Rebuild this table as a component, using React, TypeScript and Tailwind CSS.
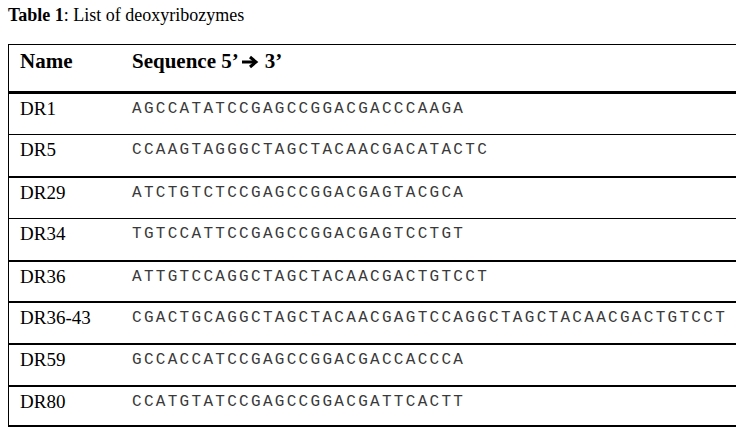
import React from 'react';

const rows = [
  { name: 'DR1', seq: 'AGCCATATCCGAGCCGGACGACCCAAGA', cls: 'h-[41px] border-b' },
  { name: 'DR5', seq: 'CCAAGTAGGGCTAGCTACAACGACATACTC', cls: 'h-[43px] border-b-2' },
  { name: 'DR29', seq: 'ATCTGTCTCCGAGCCGGACGAGTACGCA', cls: 'h-[41px] border-b' },
  { name: 'DR34', seq: 'TGTCCATTCCGAGCCGGACGAGTCCTGT', cls: 'h-[43px] border-b-2' },
  { name: 'DR36', seq: 'ATTGTCCAGGCTAGCTACAACGACTGTCCT', cls: 'h-[41px] border-b-2' },
  { name: 'DR36-43', seq: 'CGACTGCAGGCTAGCTACAACGAGTCCAGGCTAGCTACAACGACTGTCCT', cls: 'h-[42px] border-b-2' },
  { name: 'DR59', seq: 'GCCACCATCCGAGCCGGACGACCACCCA', cls: 'h-[42px] border-b-2' },
  { name: 'DR80', seq: 'CCATGTATCCGAGCCGGACGATTCACTT', cls: 'h-[40px] border-b-2' },
];

const Arrow = () => (
  <svg width="18" height="14" viewBox="0 0 18 14" className="inline-block ml-[2px] mr-[6px] -mb-[1px]">
    <path d="M1 7h13" stroke="#000" strokeWidth="3" />
    <path d="M9 2l6 5-6 5" stroke="#000" strokeWidth="3" fill="none" />
  </svg>
);

export default function App() {
  return (
    <div className="w-[736px] h-[428px] overflow-hidden bg-white text-black font-['Liberation_Serif',serif]">
      <div className="pl-[8px] pt-[4px] h-[44px] text-[18px] leading-[22px]">
        <span className="font-bold">Table 1</span>: List of deoxyribozymes
      </div>

      <div className="ml-[8px] w-[760px] border-l border-t border-black">
        {/* header */}
        <div className="flex h-[49px] border-b-[3px] border-black pt-[3px] text-[21px] font-bold leading-[26px]">
          <div className="w-[123px] pl-[11px]">Name</div>
          <div className="flex items-center h-[26px]">
            Sequence 5’<Arrow />3’
          </div>
        </div>

        {rows.map((r) => (
          <div key={r.name} className={`flex border-black ${r.cls}`}>
            <div className="w-[123px] pl-[11px] pt-[3px] text-[19px] leading-[24px]">{r.name}</div>
            <div className="pt-[4px] text-[16px] leading-[22px] tracking-[2.3px] text-[#3a3a3a] font-['Liberation_Mono',monospace] whitespace-nowrap">
              {r.seq}
            </div>
          </div>
        ))}
      </div>
    </div>
  );
}
